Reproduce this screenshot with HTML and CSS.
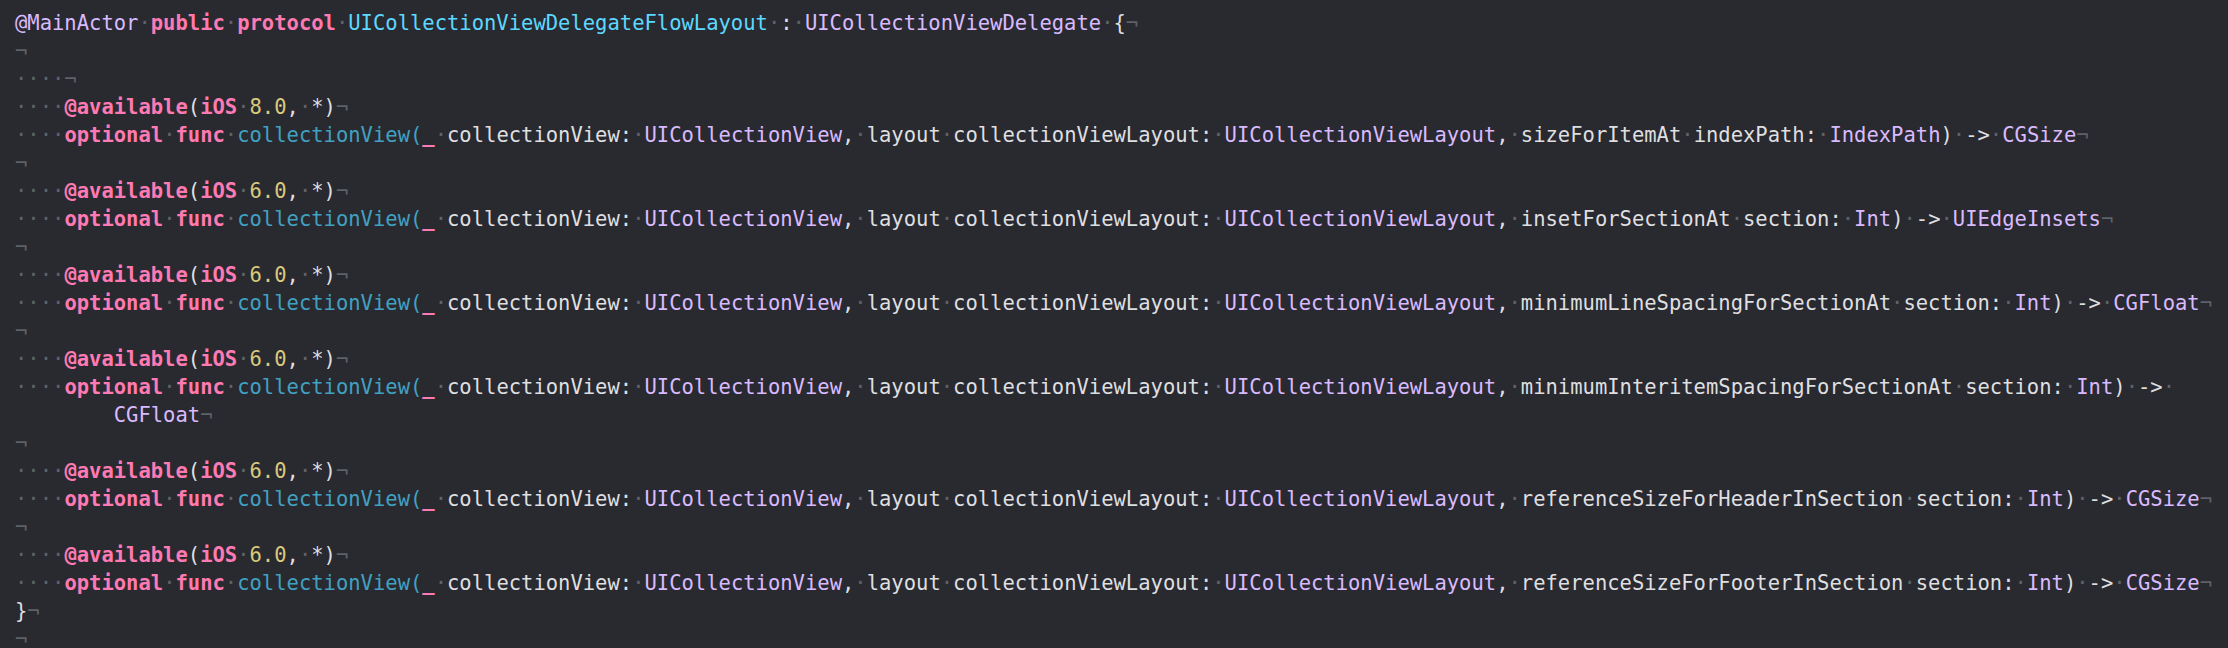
FILE: index.html
```html
<!DOCTYPE html>
<html lang="en">
<head>
<meta charset="utf-8">
<title>UICollectionViewDelegateFlowLayout</title>
<link rel="stylesheet" href="styles.css">
</head>
<body>
<main class="editor">
<div class="line"><span class="t">@MainActor</span><span class="v">·</span><span class="k">public</span><span class="v">·</span><span class="k">protocol</span><span class="v">·</span><span class="dt">UICollectionViewDelegateFlowLayout</span><span class="v">·</span>:<span class="v">·</span><span class="t">UICollectionViewDelegate</span><span class="v">·</span>{<span class="v">¬</span></div>
<div class="line"><span class="v">¬</span></div>
<div class="line"><span class="v">····¬</span></div>
<div class="line"><span class="v">····</span><span class="k">@available</span>(<span class="k">iOS</span><span class="v">·</span><span class="n">8.0</span>,<span class="v">·</span>*)<span class="v">¬</span></div>
<div class="line"><span class="v">····</span><span class="k">optional</span><span class="v">·</span><span class="k">func</span><span class="v">·</span><span class="f">collectionView(</span><span class="k">_</span><span class="v">·</span>collectionView:<span class="v">·</span><span class="t">UICollectionView</span>,<span class="v">·</span>layout<span class="v">·</span>collectionViewLayout:<span class="v">·</span><span class="t">UICollectionViewLayout</span>,<span class="v">·</span>sizeForItemAt<span class="v">·</span>indexPath:<span class="v">·</span><span class="t">IndexPath</span>)<span class="v">·</span>-&gt;<span class="v">·</span><span class="t">CGSize</span><span class="v">¬</span></div>
<div class="line"><span class="v">¬</span></div>
<div class="line"><span class="v">····</span><span class="k">@available</span>(<span class="k">iOS</span><span class="v">·</span><span class="n">6.0</span>,<span class="v">·</span>*)<span class="v">¬</span></div>
<div class="line"><span class="v">····</span><span class="k">optional</span><span class="v">·</span><span class="k">func</span><span class="v">·</span><span class="f">collectionView(</span><span class="k">_</span><span class="v">·</span>collectionView:<span class="v">·</span><span class="t">UICollectionView</span>,<span class="v">·</span>layout<span class="v">·</span>collectionViewLayout:<span class="v">·</span><span class="t">UICollectionViewLayout</span>,<span class="v">·</span>insetForSectionAt<span class="v">·</span>section:<span class="v">·</span><span class="t">Int</span>)<span class="v">·</span>-&gt;<span class="v">·</span><span class="t">UIEdgeInsets</span><span class="v">¬</span></div>
<div class="line"><span class="v">¬</span></div>
<div class="line"><span class="v">····</span><span class="k">@available</span>(<span class="k">iOS</span><span class="v">·</span><span class="n">6.0</span>,<span class="v">·</span>*)<span class="v">¬</span></div>
<div class="line"><span class="v">····</span><span class="k">optional</span><span class="v">·</span><span class="k">func</span><span class="v">·</span><span class="f">collectionView(</span><span class="k">_</span><span class="v">·</span>collectionView:<span class="v">·</span><span class="t">UICollectionView</span>,<span class="v">·</span>layout<span class="v">·</span>collectionViewLayout:<span class="v">·</span><span class="t">UICollectionViewLayout</span>,<span class="v">·</span>minimumLineSpacingForSectionAt<span class="v">·</span>section:<span class="v">·</span><span class="t">Int</span>)<span class="v">·</span>-&gt;<span class="v">·</span><span class="t">CGFloat</span><span class="v">¬</span></div>
<div class="line"><span class="v">¬</span></div>
<div class="line"><span class="v">····</span><span class="k">@available</span>(<span class="k">iOS</span><span class="v">·</span><span class="n">6.0</span>,<span class="v">·</span>*)<span class="v">¬</span></div>
<div class="line"><span class="v">····</span><span class="k">optional</span><span class="v">·</span><span class="k">func</span><span class="v">·</span><span class="f">collectionView(</span><span class="k">_</span><span class="v">·</span>collectionView:<span class="v">·</span><span class="t">UICollectionView</span>,<span class="v">·</span>layout<span class="v">·</span>collectionViewLayout:<span class="v">·</span><span class="t">UICollectionViewLayout</span>,<span class="v">·</span>minimumInteritemSpacingForSectionAt<span class="v">·</span>section:<span class="v">·</span><span class="t">Int</span>)<span class="v">·</span>-&gt;<span class="v">·</span></div>
<div class="line wrap"><span class="t">CGFloat</span><span class="v">¬</span></div>
<div class="line"><span class="v">¬</span></div>
<div class="line"><span class="v">····</span><span class="k">@available</span>(<span class="k">iOS</span><span class="v">·</span><span class="n">6.0</span>,<span class="v">·</span>*)<span class="v">¬</span></div>
<div class="line"><span class="v">····</span><span class="k">optional</span><span class="v">·</span><span class="k">func</span><span class="v">·</span><span class="f">collectionView(</span><span class="k">_</span><span class="v">·</span>collectionView:<span class="v">·</span><span class="t">UICollectionView</span>,<span class="v">·</span>layout<span class="v">·</span>collectionViewLayout:<span class="v">·</span><span class="t">UICollectionViewLayout</span>,<span class="v">·</span>referenceSizeForHeaderInSection<span class="v">·</span>section:<span class="v">·</span><span class="t">Int</span>)<span class="v">·</span>-&gt;<span class="v">·</span><span class="t">CGSize</span><span class="v">¬</span></div>
<div class="line"><span class="v">¬</span></div>
<div class="line"><span class="v">····</span><span class="k">@available</span>(<span class="k">iOS</span><span class="v">·</span><span class="n">6.0</span>,<span class="v">·</span>*)<span class="v">¬</span></div>
<div class="line"><span class="v">····</span><span class="k">optional</span><span class="v">·</span><span class="k">func</span><span class="v">·</span><span class="f">collectionView(</span><span class="k">_</span><span class="v">·</span>collectionView:<span class="v">·</span><span class="t">UICollectionView</span>,<span class="v">·</span>layout<span class="v">·</span>collectionViewLayout:<span class="v">·</span><span class="t">UICollectionViewLayout</span>,<span class="v">·</span>referenceSizeForFooterInSection<span class="v">·</span>section:<span class="v">·</span><span class="t">Int</span>)<span class="v">·</span>-&gt;<span class="v">·</span><span class="t">CGSize</span><span class="v">¬</span></div>
<div class="line">}<span class="v">¬</span></div>
<div class="line"><span class="v">¬</span></div>
</main>
</body>
</html>
```

FILE: styles.css
```css
html, body {
  margin: 0;
  padding: 0;
  background: #292a30;
  height: 100%;
  overflow: hidden;
}

.editor {
  display: flex;
  flex-direction: column;
  padding: 9px 0 0 15px;
  font-family: "DejaVu Sans Mono", "Liberation Mono", monospace;
  font-size: 20.5px;
  line-height: 28px;
  color: #dfdfe0;
}

.line {
  white-space: pre;
  height: 28px;
}

.wrap {
  padding-left: 8ch;
}

.k {
  color: #ff7ab2;
  font-weight: bold;
}

.t {
  color: #dabaff;
}

.dt {
  color: #5dd8ff;
}

.f {
  color: #41a1c0;
}

.n {
  color: #d9c97c;
}

.v {
  color: #5f6168;
}
```
